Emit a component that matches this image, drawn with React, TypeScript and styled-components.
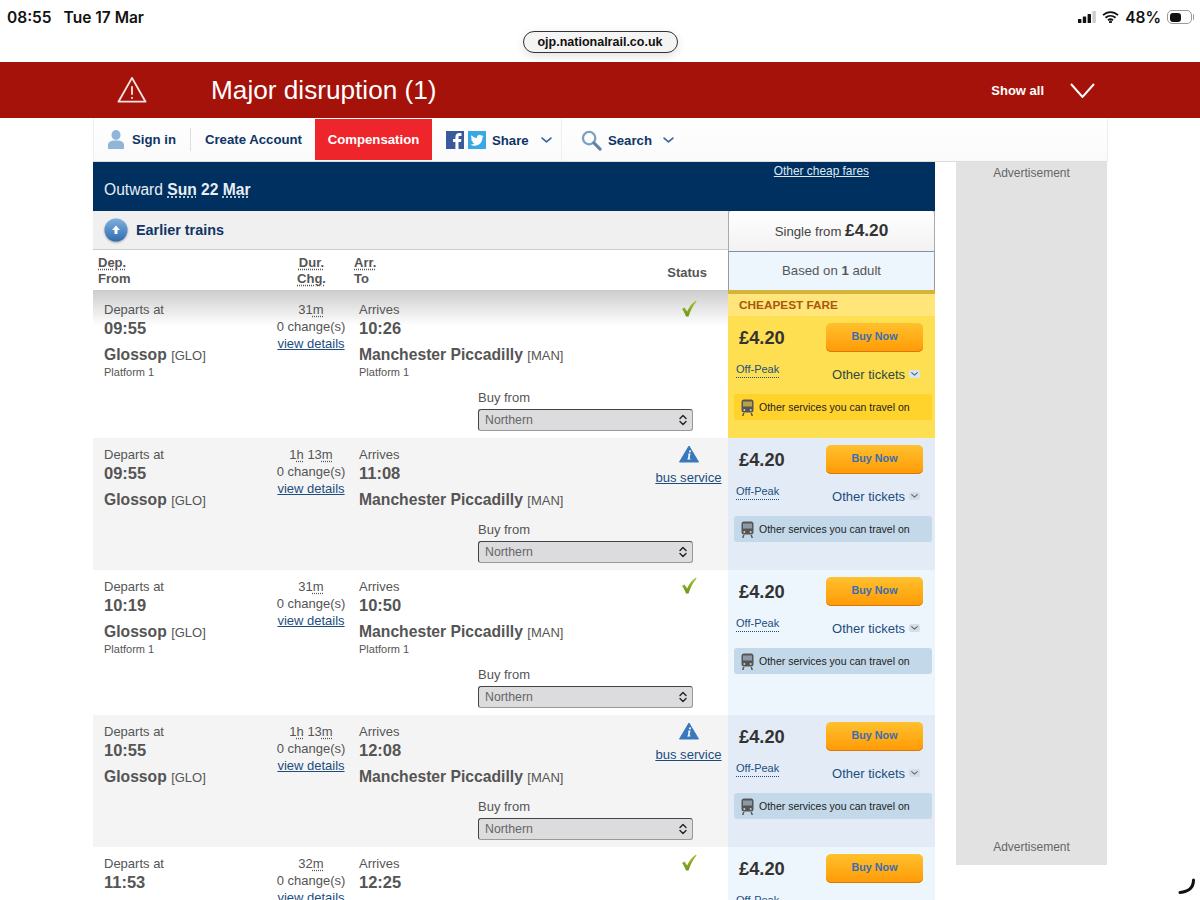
import styled, { createGlobalStyle } from 'styled-components'

const GlobalStyle = createGlobalStyle`
  html, body {
    margin: 0;
    padding: 0;
    height: 900px;
    overflow: hidden;
    background: #fff;
    font-family: 'Liberation Sans', Arial, sans-serif;
  }
  * { box-sizing: border-box; }
`

type Train = {
  depart: string
  duration: [string, string]
  arrive: string
  platform?: boolean
  bus?: boolean
  cheapest?: boolean
  light?: boolean
}

const trains: Train[] = [
  { depart: '09:55', duration: ['31', ''], arrive: '10:26', platform: true, cheapest: true },
  { depart: '09:55', duration: ['1', '13'], arrive: '11:08', bus: true },
  { depart: '10:19', duration: ['31', ''], arrive: '10:50', platform: true, light: true },
  { depart: '10:55', duration: ['1', '13'], arrive: '12:08', bus: true },
  { depart: '11:53', duration: ['32', ''], arrive: '12:25', platform: true, light: true }
]

const WarningIcon = () => (
  <svg width="30" height="28" viewBox="0 0 32 30" fill="none" stroke="#f6e3df" strokeWidth="2" strokeLinejoin="round">
    <path d="M16 2 L30.500 27.500 H1.500 Z" />
    <path d="M16 11 V20" strokeWidth="2" />
    <path d="M16 22.500 V24.500" strokeWidth="2" />
  </svg>
)

const UserIcon = () => (
  <svg width="16" height="19" viewBox="0 0 16 19" fill="#8fb6d8">
    <ellipse cx="8" cy="5" rx="4.500" ry="5" />
    <path d="M0 19 V15 C0 12 3 11 5 10.500 H11 C13 11 16 12 16 15 V19 Z" />
  </svg>
)

const FacebookIcon = () => (
  <svg width="18" height="18" viewBox="0 0 18 18">
    <rect width="18" height="18" fill="#3b5a9c" />
    <path d="M12.500 18 V11 H15 L15.400 8 H12.500 V6.300 C12.500 5.400 12.800 4.900 13.900 4.900 H15.500 V2.200 C15 2.100 14.200 2 13.300 2 C11 2 9.400 3.400 9.400 5.900 V8 H7 V11 H9.400 V18 Z" fill="#fff" />
  </svg>
)

const TwitterIcon = () => (
  <svg width="18" height="18" viewBox="0 0 18 18">
    <rect width="18" height="18" fill="#38a9e4" />
    <path d="M15.500 5 C15 5.200 14.500 5.400 14 5.450 C14.500 5.100 14.900 4.600 15.100 4 C14.600 4.300 14.100 4.500 13.500 4.650 C13 4.100 12.300 3.800 11.600 3.800 C10.100 3.800 8.900 5 8.900 6.500 C8.900 6.700 8.900 6.900 9 7.100 C6.800 7 4.800 5.900 3.500 4.300 C3.300 4.700 3.100 5.200 3.100 5.700 C3.100 6.600 3.600 7.500 4.300 8 C3.900 8 3.500 7.900 3.100 7.700 C3.100 9 4 10.100 5.300 10.400 C4.900 10.500 4.500 10.500 4.100 10.450 C4.400 11.500 5.400 12.300 6.600 12.300 C5.400 13.200 4 13.700 2.500 13.500 C3.700 14.300 5.200 14.800 6.700 14.800 C11.700 14.800 14.400 10.700 14.400 7.100 V6.800 C14.800 6.500 15.200 5.800 15.500 5 Z" fill="#fff" />
  </svg>
)

const SearchIcon = () => (
  <svg width="21" height="21" viewBox="0 0 22 22" fill="none">
    <circle cx="8.500" cy="8.500" r="6.500" stroke="#7d9fc0" strokeWidth="2.400" />
    <path d="M13.500 13.500 L20 20" stroke="#5e82a8" strokeWidth="3.200" strokeLinecap="round" />
  </svg>
)

const Chevron = ({ size = 11, color = '#3d6a9c' }: { size?: number; color?: string }) => (
  <svg width={size} height={size * 0.6} viewBox="0 0 10 6" fill="none" stroke={color} strokeWidth="1.600" strokeLinecap="round" strokeLinejoin="round">
    <path d="M1 1 L5 4.500 L9 1" />
  </svg>
)

const CheckIcon = () => (
  <svg width="16" height="17" viewBox="0 0 16 17">
    <defs>
      <linearGradient id="tick" x1="0" y1="0" x2="0" y2="1">
        <stop offset="0" stopColor="#a9c234" />
        <stop offset="1" stopColor="#6f9418" />
      </linearGradient>
    </defs>
    <path d="M1 9 L3.500 7.500 L6.200 11.500 C8 7 11 3 15 0.500 L15.500 1.500 C12 5.500 9.500 10.500 7.500 16.500 H5 C4 13.500 2.500 11 1 9 Z" fill="url(#tick)" />
  </svg>
)

const InfoIcon = () => (
  <svg width="20" height="18" viewBox="0 0 20 18">
    <path d="M10 1 L19.500 17 H0.500 Z" fill="#3a78bd" stroke="#3a78bd" strokeWidth="1" strokeLinejoin="round" />
    <path d="M10.300 5.500 h1.800 l-0.400 1.800 h-1.800 Z M9.700 8.500 h1.800 l-1 5 h1 l-0.200 1 h-3 l0.200 -1 h0.400 l0.700 -4 h-0.700 Z" fill="#fff" />
  </svg>
)

const BusIcon = ({ cheapest }: { cheapest?: boolean }) => (
  <svg width="13" height="17" viewBox="0 0 13 17">
    <rect x="0.500" y="0.500" width="12" height="13" rx="2.500" fill="#555" />
    <rect x="2" y="2.500" width="9" height="5" fill={cheapest ? '#b9a04a' : '#8d9aa5'} />
    <circle cx="3.300" cy="11" r="1" fill="#ccc" />
    <circle cx="9.700" cy="11" r="1" fill="#ccc" />
    <path d="M2 14 L1 17 H2.500 L3.500 14 Z M11 14 L12 17 H10.500 L9.500 14 Z" fill="#555" />
  </svg>
)

const SelectArrows = () => (
  <svg width="8" height="12" viewBox="0 0 8 12" fill="none" stroke="#222" strokeWidth="1.400" strokeLinecap="round" strokeLinejoin="round">
    <path d="M1 4.500 L4 1.500 L7 4.500 M1 7.500 L4 10.500 L7 7.500" />
  </svg>
)

const TrainRow = ({ train }: { train: Train }) => (
  <Row>
    <RowMain $cheapest={train.cheapest} $shaded={!!train.bus}>
      <RowColumns>
        <Stop>
          <StopLabel>Departs at</StopLabel>
          <StopTime>{train.depart}</StopTime>
          <StopName>
            Glossop <StopCode>[GLO]</StopCode>
          </StopName>
          {train.platform && <Platform>Platform 1</Platform>}
        </Stop>
        <Duration>
          <div>
            {train.duration[1] ? (
              <>
                {train.duration[0]}
                <Dotted>h</Dotted> {train.duration[1]}
                <Dotted>m</Dotted>
              </>
            ) : (
              <>
                {train.duration[0]}
                <Dotted>m</Dotted>
              </>
            )}
          </div>
          <div>0 change(s)</div>
          <DetailsLink>view details</DetailsLink>
        </Duration>
        <Stop>
          <StopLabel>Arrives</StopLabel>
          <StopTime>{train.arrive}</StopTime>
          <StopName>
            Manchester Piccadilly <StopCode>[MAN]</StopCode>
          </StopName>
          {train.platform && <Platform>Platform 1</Platform>}
        </Stop>
        <Status>
          {train.bus ? <InfoIcon /> : <CheckIcon />}
          {train.bus && <BusLink>bus service</BusLink>}
        </Status>
      </RowColumns>
      <BuyFrom>
        <BuyLabel>Buy from</BuyLabel>
        <Select>
          Northern
          <SelectArrows />
        </Select>
      </BuyFrom>
    </RowMain>
    <Fare $cheapest={train.cheapest} $light={train.light}>
      {train.cheapest && <CheapestBar>CHEAPEST FARE</CheapestBar>}
      <FareTop>
        <Price>£4.20</Price>
        <BuyButton>Buy Now</BuyButton>
      </FareTop>
      <FareMiddle>
        <OffPeak>Off-Peak</OffPeak>
        <OtherTickets $cheapest={train.cheapest}>
          Other tickets
          <ChevronBox $cheapest={train.cheapest}>
            <Chevron size={7} color={train.cheapest ? '#3d6a9c' : '#667'} />
          </ChevronBox>
        </OtherTickets>
      </FareMiddle>
      <Services $cheapest={train.cheapest}>
        <BusIcon cheapest={train.cheapest} />
        Other services you can travel on
      </Services>
    </Fare>
  </Row>
)

export default function App() {
  return (
    <>
      <GlobalStyle />
      <StatusBar>
        <Clock>
          <span>08:55</span>
          <span>Tue 17 Mar</span>
        </Clock>
        <StatusRight>
          <svg width="18" height="12" viewBox="0 0 18 12" fill="#111">
            <rect x="0" y="8" width="3.400" height="4" rx="0.500" />
            <rect x="4.800" y="5.500" width="3.400" height="6.500" rx="0.500" />
            <rect x="9.600" y="3" width="3.400" height="9" rx="0.500" />
            <rect x="14.400" y="0" width="3.400" height="12" rx="0.500" fill="#ccc" />
          </svg>
          <svg width="17" height="12" viewBox="0 0 17 12" fill="none" stroke="#111" strokeWidth="1.800">
            <path d="M1 4.200 C5.500 0 11.500 0 16 4.200" />
            <path d="M3.500 6.800 C6.500 4.200 10.500 4.200 13.500 6.800" />
            <path d="M6 9.200 C7.500 8 9.500 8 11 9.200" />
            <circle cx="8.500" cy="11" r="0.600" fill="#111" />
          </svg>
          <Battery48>48%</Battery48>
          <Battery>
            <BatteryFill />
          </Battery>
        </StatusRight>
      </StatusBar>
      <AddressRow>
        <AddressPill>ojp.nationalrail.co.uk</AddressPill>
      </AddressRow>
      <Disruption>
        <DisruptionLeft>
          <WarningIcon />
          <DisruptionTitle>Major disruption (1)</DisruptionTitle>
        </DisruptionLeft>
        <ShowAll>
          Show all
          <svg width="25" height="15" viewBox="0 0 25 15" fill="none" stroke="#fff" strokeWidth="2">
            <path d="M1 1 L12.500 14 L24 1" />
          </svg>
        </ShowAll>
      </Disruption>
      <Page>
        <Nav>
          <NavItem $divider>
            <UserIcon />
            Sign in
          </NavItem>
          <NavItem>Create Account</NavItem>
          <RedItem>Compensation</RedItem>
          <ShareItem>
            <FacebookIcon />
            <TwitterIcon />
            <ShareText>Share</ShareText>
            <Chevron />
          </ShareItem>
          <SearchItem>
            <SearchIcon />
            <span>Search</span>
            <Chevron />
          </SearchItem>
        </Nav>
        <Content>
          <Results>
            <Outward>
              <span>
                Outward <Abbr>Sun</Abbr> <strong>22</strong> <Abbr>Mar</Abbr>
              </span>
              <CheapLink>Other cheap fares</CheapLink>
            </Outward>
            <Heading>
              <HeadingLeft>
                <EarlierBar>
                  <EarlierIcon width="24" height="24" viewBox="0 0 24 24">
                    <defs>
                      <linearGradient id="earlier" x1="0" y1="0" x2="0" y2="1">
                        <stop offset="0" stopColor="#7fb0de" />
                        <stop offset="1" stopColor="#2f6cae" />
                      </linearGradient>
                    </defs>
                    <circle cx="12" cy="12" r="11.500" fill="url(#earlier)" />
                    <path d="M12 7.500 L16 12 H13.500 V16 H10.500 V12 H8 Z" fill="#fff" />
                  </EarlierIcon>
                  Earlier trains
                </EarlierBar>
                <ColumnTitles>
                  <ColumnBlock>
                    <Abbr>Dep.</Abbr>
                    <span>From</span>
                  </ColumnBlock>
                  <ColumnCentre>
                    <Abbr>Dur.</Abbr>
                    <Abbr>Chg.</Abbr>
                  </ColumnCentre>
                  <ColumnBlock>
                    <Abbr>Arr.</Abbr>
                    <span>To</span>
                  </ColumnBlock>
                  <StatusTitle>Status</StatusTitle>
                </ColumnTitles>
              </HeadingLeft>
              <HeadingRight>
                <SingleFrom>
                  Single from <strong>£4.20</strong>
                </SingleFrom>
                <BasedOn>
                  Based on <strong>1</strong> adult
                </BasedOn>
              </HeadingRight>
            </Heading>
            {trains.map((train, index) => (
              <TrainRow key={index} train={train} />
            ))}
          </Results>
          <AdColumn>
            <span>Advertisement</span>
            <span>Advertisement</span>
          </AdColumn>
        </Content>
      </Page>
      <Spinner width="18" height="18" viewBox="0 0 18 18" fill="none" stroke="#111" strokeWidth="3" strokeLinecap="round">
        <path d="M15.500 2 C15.500 8 12 13.500 2 14.500" />
      </Spinner>
    </>
  )
}

const StatusBar = styled.div`
  display: flex;
  justify-content: space-between;
  align-items: center;
  height: 31px;
  padding: 4px 8px 0 7px;
  color: #111;
  font-family: Inter, 'Liberation Sans', sans-serif;
  font-weight: 600;
`

const Clock = styled.div`
  display: flex;
  gap: 12px;
  font-size: 15.500px;
  margin-top: -1px;
`

const StatusRight = styled.div`
  display: flex;
  align-items: center;
  gap: 6px;
  margin-top: -1px;
`

const Battery48 = styled.span`
  font-size: 15.500px;
`

const Battery = styled.div`
  position: relative;
  width: 25px;
  height: 14px;
  border: 1px solid #999;
  border-radius: 5px;
  padding: 1.500px;
  &::after {
    content: '';
    position: absolute;
    right: -3px;
    top: 3px;
    width: 1.500px;
    height: 6px;
    background: #999;
    border-radius: 0 1px 1px 0;
  }
`

const BatteryFill = styled.div`
  width: 11px;
  height: 100%;
  background: #111;
  border-radius: 3px;
`

const AddressRow = styled.div`
  display: flex;
  justify-content: center;
  height: 31px;
`

const AddressPill = styled.div`
  width: 155px;
  height: 22px;
  border: 1px solid #333;
  border-radius: 11px;
  background: #f4f4f4;
  color: #111;
  font-size: 12.500px;
  font-weight: 700;
  line-height: 21px;
  text-align: center;
  box-shadow: 0 3px 10px rgba(0, 0, 0, 0.12);
`

const Disruption = styled.div`
  display: flex;
  justify-content: space-between;
  align-items: center;
  height: 56px;
  padding: 0 105px 0 117px;
  background: #a41209;
  color: #fff;
`

const DisruptionLeft = styled.div`
  display: flex;
  align-items: center;
  gap: 64px;
`

const DisruptionTitle = styled.div`
  font-size: 26.200px;
  padding-top: 1px;
`

const ShowAll = styled.div`
  display: flex;
  align-items: center;
  gap: 26px;
  font-size: 13px;
  font-weight: 700;
`

const Page = styled.div`
  width: 1015px;
  margin-left: 93px;
`

const Nav = styled.div`
  display: flex;
  height: 44px;
  background: linear-gradient(#fff, #fafafa);
  border-left: 1px solid #eee;
  border-right: 1px solid #eee;
  border-bottom: 1px solid #ddd;
  color: #0f3566;
  font-size: 13.200px;
  font-weight: 700;
`

const NavItem = styled.div<{ $divider?: boolean }>`
  display: flex;
  align-items: center;
  gap: 8px;
  padding: 0 14px;
  padding-right: ${({ $divider }) => ($divider ? '15px' : '14px')};
  position: relative;
  &::after {
    content: '';
    display: ${({ $divider }) => ($divider ? 'block' : 'none')};
    position: absolute;
    right: 0;
    top: 10px;
    bottom: 10px;
    width: 1px;
    background: #ddd;
  }
`

const RedItem = styled.div`
  display: flex;
  align-items: center;
  justify-content: center;
  width: 117px;
  margin: 1px 0 1px -1px;
  background: #ee252a;
  color: #fff;
`

const ShareItem = styled.div`
  display: flex;
  align-items: center;
  gap: 4px;
  width: 130px;
  padding: 1px 0 0 14px;
  border-right: 1px solid #eee;
`

const ShareText = styled.span`
  margin: 0 8px 0 2px;
`

const SearchItem = styled.div`
  display: flex;
  align-items: center;
  gap: 6px;
  padding: 2px 0 0 19px;
  span {
    margin-right: 5px;
  }
`

const Content = styled.div`
  display: flex;
  gap: 21px;
`

const Results = styled.div`
  width: 842px;
  flex-shrink: 0;
`

const Outward = styled.div`
  position: relative;
  height: 49px;
  padding: 19px 0 0 11px;
  background: #00305f;
  color: #e8eef5;
  font-size: 15.600px;
  strong {
    font-weight: 700;
  }
`

const Abbr = styled.abbr`
  font-weight: 700;
  text-decoration: underline dotted;
  text-underline-offset: 2px;
`

const CheapLink = styled.a`
  position: absolute;
  right: 66px;
  top: 2px;
  color: #dfe8f2;
  font-size: 11.900px;
  text-decoration: underline;
`

const Heading = styled.div`
  display: flex;
`

const HeadingLeft = styled.div`
  width: 635px;
`

const EarlierBar = styled.div`
  display: flex;
  align-items: center;
  gap: 8px;
  height: 39px;
  padding-left: 11px;
  background: #f0f0f0;
  border-bottom: 1px solid #ccc;
  color: #0f3566;
  font-size: 14.400px;
  font-weight: 700;
`

const EarlierIcon = styled.svg`
  filter: drop-shadow(0 1px 1px rgba(0, 0, 0, 0.3));
`

const ColumnTitles = styled.div`
  display: grid;
  grid-template-columns: 176px 80px 281px 1fr;
  height: 40px;
  padding: 5px 0 0 5px;
  color: #555;
  font-size: 13px;
  font-weight: 700;
  line-height: 16px;
`

const ColumnBlock = styled.div`
  display: flex;
  flex-direction: column;
  align-items: flex-start;
`

const ColumnCentre = styled(ColumnBlock)`
  align-items: center;
  padding-right: 5px;
`

const StatusTitle = styled.div`
  align-self: center;
  text-align: right;
  padding-right: 21px;
`

const HeadingRight = styled.div`
  width: 207px;
  margin-top: -1px;
`

const SingleFrom = styled.div`
  height: 42px;
  border: 1px solid #aaa;
  border-bottom-color: #8a8f96;
  border-radius: 3px 3px 0 0;
  background: linear-gradient(#fff, #f2f2f2);
  color: #444;
  font-size: 13.200px;
  line-height: 39px;
  text-align: center;
  strong {
    color: #333;
    font-size: 17.300px;
  }
`

const BasedOn = styled.div`
  height: 38px;
  border-left: 1px solid #999;
  border-right: 1px solid #999;
  background: #eef6fd;
  color: #555;
  font-size: 13.200px;
  line-height: 38px;
  text-align: center;
`

const Row = styled.div`
  display: flex;
`

const RowMain = styled.div<{ $cheapest?: boolean; $shaded: boolean }>`
  width: 635px;
  padding: ${({ $cheapest }) => ($cheapest ? '12px' : '9px')} 6px 7px 11px;
  background: ${({ $cheapest, $shaded }) =>
    $cheapest ? 'linear-gradient(#ccc, #fff 36px)' : $shaded ? '#f4f4f4' : '#fff'};
  color: #555;
`

const RowColumns = styled.div`
  display: grid;
  grid-template-columns: 165px 90px 1fr 67px;
`

const Stop = styled.div`
  display: flex;
  flex-direction: column;
`

const StopLabel = styled.div`
  font-size: 13px;
  line-height: 15px;
`

const StopTime = styled.div`
  font-size: 16.500px;
  font-weight: 700;
  line-height: 22px;
  margin-bottom: 6px;
`

const StopName = styled.div`
  font-size: 15.700px;
  font-weight: 700;
  line-height: 20px;
  white-space: nowrap;
`

const StopCode = styled.span`
  font-size: 13px;
  font-weight: 400;
`

const Platform = styled.div`
  font-size: 11px;
  line-height: 13px;
`

const Duration = styled.div`
  margin-top: -1px;
  padding-right: 6px;
  font-size: 13px;
  line-height: 17px;
  text-align: center;
  white-space: nowrap;
`

const Dotted = styled.span`
  text-decoration: underline dotted;
  text-underline-offset: 2px;
`

const DetailsLink = styled.a`
  display: block;
  color: #1d4d80;
  text-decoration: underline;
`

const Status = styled.div`
  display: flex;
  flex-direction: column;
  align-items: center;
  margin-top: -2px;
  gap: 7px;
`

const BusLink = styled.a`
  color: #1d4d80;
  font-size: 13.100px;
  text-decoration: underline;
  white-space: nowrap;
`

const BuyFrom = styled.div`
  width: 215px;
  margin: 11px 0 0 374px;
`

const BuyLabel = styled.div`
  font-size: 13px;
  line-height: 16px;
  margin-bottom: 3px;
`

const Select = styled.div`
  display: flex;
  justify-content: space-between;
  align-items: center;
  height: 22px;
  padding: 0 5px 0 6px;
  border: 1px solid #444;
  border-bottom-color: #999;
  border-right-color: #999;
  border-radius: 3px;
  background: #dcdcde;
  color: #666;
  font-size: 12.300px;
`

const Fare = styled.div<{ $cheapest?: boolean; $light?: boolean }>`
  width: 207px;
  padding-bottom: 10px;
  background: ${({ $cheapest, $light }) =>
    $cheapest ? '#ffdf52' : $light ? '#eef6fd' : '#e3ecf6'};
  color: #333;
`

const CheapestBar = styled.div`
  height: 26px;
  padding: 2px 0 0 11px;
  border-top: 4px solid #d2b33c;
  background: #ffe57a;
  color: #a8580a;
  font-size: 11.800px;
  font-weight: 700;
  line-height: 18px;
`

const FareTop = styled.div`
  display: flex;
  justify-content: space-between;
  align-items: center;
  padding: 7px 12px 0 11px;
`

const Price = styled.div`
  font-size: 18.300px;
  font-weight: 700;
`

const BuyButton = styled.div`
  width: 97px;
  height: 29px;
  border-radius: 5px;
  background: linear-gradient(#ffc12e, #ff9a05);
  box-shadow: inset 0 -1px 0 #d9780a;
  color: #3b6db0;
  font-size: 10.800px;
  font-weight: 700;
  line-height: 27px;
  text-align: center;
`

const FareMiddle = styled.div`
  display: flex;
  justify-content: space-between;
  padding: 10px 15px 0 8px;
  height: 42px;
`

const OffPeak = styled.div`
  align-self: flex-start;
  color: #1d4d80;
  font-size: 11px;
  line-height: 15px;
  border-bottom: 1px dotted #1d4d80;
`

const OtherTickets = styled.div<{ $cheapest?: boolean }>`
  display: flex;
  align-items: center;
  gap: 4px;
  height: 18px;
  margin-top: 3px;
  color: ${({ $cheapest }) => ($cheapest ? '#2d4a42' : '#1d4d80')};
  font-size: 13px;
`

const ChevronBox = styled.span<{ $cheapest?: boolean }>`
  display: flex;
  align-items: center;
  justify-content: center;
  width: 11px;
  height: 8px;
  border-radius: 2px;
  background: ${({ $cheapest }) => ($cheapest ? '#d9e4ef' : '#d5dde6')};
`

const Services = styled.div<{ $cheapest?: boolean }>`
  display: flex;
  align-items: center;
  gap: 5px;
  width: 198px;
  height: 26px;
  margin-left: 6px;
  padding-left: 7px;
  border-radius: 3px;
  background: ${({ $cheapest }) => ($cheapest ? '#ffd22c' : '#c3d8e9')};
  color: #222;
  font-size: 10.500px;
`

const AdColumn = styled.div`
  display: flex;
  flex-direction: column;
  justify-content: space-between;
  width: 151px;
  height: 703px;
  padding: 4px 0 11px;
  background: #e2e2e2;
  color: #666;
  font-size: 12px;
  text-align: center;
`

const Spinner = styled.svg`
  position: absolute;
  left: 1178px;
  top: 878px;
`
